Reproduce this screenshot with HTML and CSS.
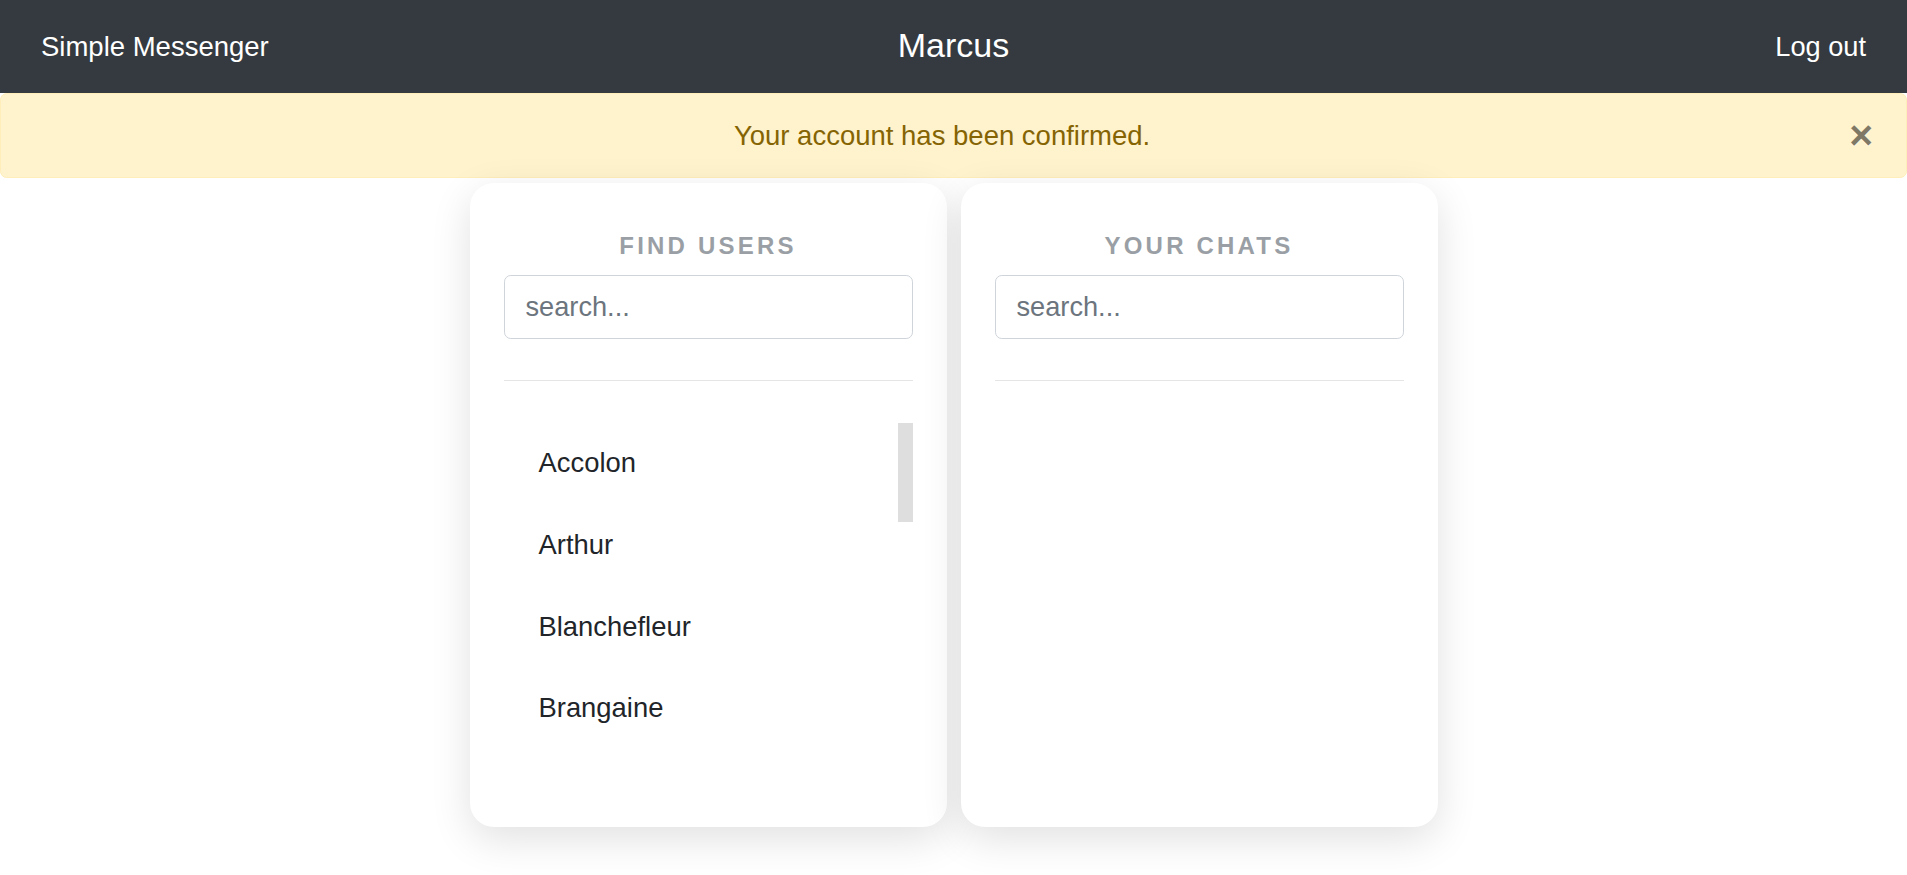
FILE: index.html
```html
<!DOCTYPE html>
<html lang="en">
<head>
<meta charset="utf-8">
<title>Simple Messenger</title>
<link rel="stylesheet" href="styles.css">
</head>
<body>
<nav class="navbar">
  <a class="brand" href="#">Simple Messenger</a>
  <span class="current-user">Marcus</span>
  <a class="logout" href="#">Log out</a>
</nav>
<div class="alert">
  <span class="alert-text">Your account has been confirmed.</span>
  <button class="close" type="button" aria-label="Close">×</button>
</div>
<main class="panels">
  <section class="card">
    <h5 class="card-title">Find users</h5>
    <input class="search" type="text" placeholder="search...">
    <hr class="divider">
    <div class="list-wrap">
      <ul class="list">
        <li class="list-item">Accolon</li>
        <li class="list-item">Arthur</li>
        <li class="list-item">Blanchefleur</li>
        <li class="list-item">Brangaine</li>
        <li class="list-item">Bors</li>
        <li class="list-item">Caradoc</li>
        <li class="list-item">Dagonet</li>
        <li class="list-item">Ector</li>
        <li class="list-item">Elaine</li>
        <li class="list-item">Gaheris</li>
        <li class="list-item">Galahad</li>
        <li class="list-item">Gareth</li>
        <li class="list-item">Gawain</li>
      </ul>
      <div class="scroll-thumb"></div>
    </div>
  </section>
  <section class="card">
    <h5 class="card-title">Your chats</h5>
    <input class="search" type="text" placeholder="search...">
    <hr class="divider">
    <div class="list-wrap">
      <ul class="list"></ul>
    </div>
  </section>
</main>
</body>
</html>
```
FILE: styles.css
```css
html, body {
  margin: 0;
  padding: 0;
}
body {
  font-family: "Liberation Sans", Arial, sans-serif;
  color: #212529;
  background: #fff;
  min-height: 100vh;
}
.navbar {
  height: 93px;
  box-sizing: border-box;
  background: #343a40;
  display: grid;
  grid-template-columns: 1fr auto 1fr;
  align-items: center;
  padding: 0 41px 0 41px;
}
.brand, .logout {
  color: #fff;
  text-decoration: none;
  font-size: 27.2px;
  line-height: 40px;
}
.brand {
  justify-self: start;
  font-size: 27.5px;
}
.logout { justify-self: end; }
.current-user {
  color: #fff;
  font-size: 34px;
  line-height: 50px;
  margin-top: -3px;
}
.alert {
  box-sizing: border-box;
  height: 85px;
  background: #fff3cd;
  color: #856404;
  border: 1px solid #ffeeba;
  border-radius: 6.8px;
  display: flex;
  align-items: center;
  padding: 0 33px 0 34px;
  font-size: 27.5px;
  line-height: 40.8px;
}
.alert-text {
  flex: 1;
  text-align: center;
  margin-top: 1px;
}
.close {
  background: transparent;
  border: 0;
  padding: 0;
  margin: 0;
  font-family: "Liberation Sans", Arial, sans-serif;
  font-size: 40.8px;
  font-weight: 700;
  line-height: 1;
  color: #000;
  opacity: .5;
  text-shadow: 0 1px 0 #fff;
  cursor: pointer;
}
.panels {
  display: flex;
  justify-content: center;
  gap: 14px;
  margin-top: 5px;
  padding-bottom: 48px;
}
.card {
  width: 477px;
  box-sizing: border-box;
  background: #fff;
  border-radius: 24px;
  box-shadow: 0 12px 40px rgba(0, 0, 0, .12);
  padding: 50px 34px 78px;
}
.card-title {
  margin: 0 0 16px;
  text-align: center;
  text-transform: uppercase;
  font-size: 24px;
  font-weight: 700;
  letter-spacing: 3.2px;
  line-height: 26px;
  color: #9a9fa5;
}
.search {
  display: block;
  width: 100%;
  height: 64px;
  box-sizing: border-box;
  border: 1px solid #ced4da;
  border-radius: 6.8px;
  padding: 0 20.4px 0 21px;
  font-family: "Liberation Sans", Arial, sans-serif;
  font-size: 27.2px;
  color: #495057;
  outline: none;
}
.search::placeholder {
  color: #6c757d;
  opacity: 1;
}
.divider {
  margin: 41px 0 42px;
  border: 0;
  border-top: 1px solid rgba(0, 0, 0, .1);
}
.list-wrap {
  height: 326px;
  display: grid;
  grid-template-columns: 1fr 15px;
  align-items: start;
  overflow: hidden;
}
.list {
  list-style: none;
  margin: 0;
  padding: 0;
  height: 326px;
  overflow: hidden;
}
.scroll-thumb {
  height: 99px;
  background: #dedede;
}
.list-item {
  padding: 20.4px 34px 20.4px 35px;
  font-size: 27.4px;
  line-height: 40.8px;
  color: #212529;
}
```
